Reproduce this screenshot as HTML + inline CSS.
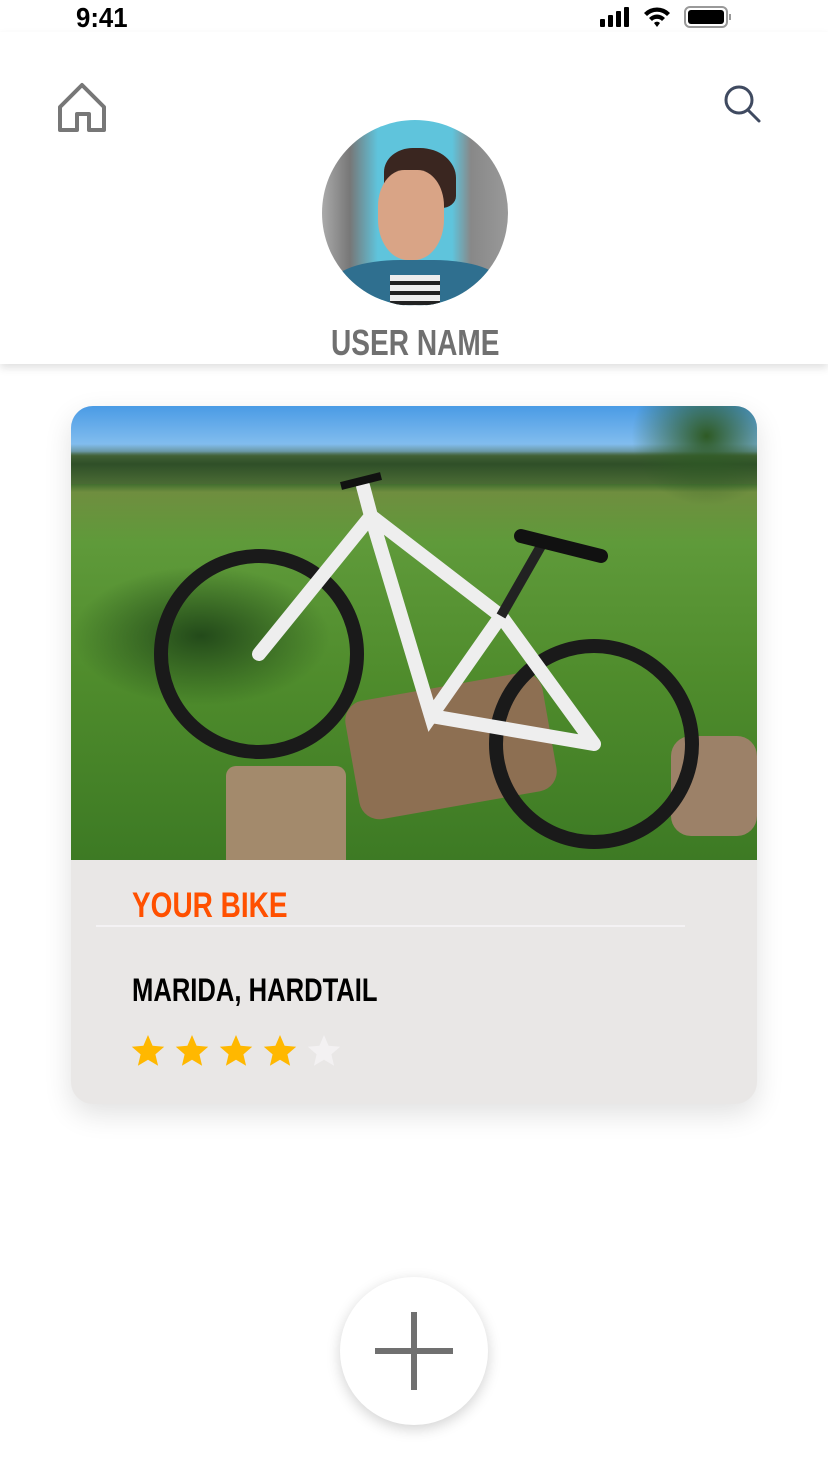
<!DOCTYPE html>
<html><head><meta charset="utf-8"><style>
html,body{margin:0;padding:0;width:828px;height:1472px;background:#fff;overflow:hidden;font-family:"Liberation Sans",sans-serif;position:relative}
.abs{position:absolute}
.cond{font-family:"Liberation Sans",sans-serif;font-weight:bold;transform:scaleX(0.8);transform-origin:left top;white-space:nowrap}
</style></head><body>
<div class="abs" style="left:0;top:0;width:828px;height:32px;background:#fff"></div>
<div class="abs" style="left:76px;top:2px;font-size:28px;font-weight:bold;color:#000;transform:scaleX(.92);transform-origin:left top">9:41</div>
<svg class="abs" style="left:596px;top:4px" width="140" height="26" viewBox="0 0 140 26">
<rect x="4" y="15" width="5" height="8" rx="1"/><rect x="12" y="11" width="5" height="12" rx="1"/><rect x="20" y="7" width="5" height="16" rx="1"/><rect x="28" y="3" width="5" height="20" rx="1"/>
<path d="M48 9a18 18 0 0 1 26 0l-3 3a14 14 0 0 0-20 0z M53 14a11 11 0 0 1 16 0l-3 3a7 7 0 0 0-10 0z M58 19a4 4 0 0 1 6 0l-3 4z"/>
<rect x="89" y="3" width="42" height="20" rx="5" fill="none" stroke="#999" stroke-width="2"/><rect x="92" y="6" width="36" height="14" rx="3"/><rect x="133" y="10" width="2" height="6" fill="#999"/>
</svg>
<div class="abs" style="left:0;top:32px;width:828px;height:332px;background:#fff;box-shadow:0 4px 8px rgba(0,0,0,.12)"></div>
<svg class="abs" style="left:56px;top:82px" width="54" height="52" viewBox="0 0 54 52"><path d="M4 48V25L26 3L48 25V48H33V32H21V48Z" fill="none" stroke="#777" stroke-width="4" stroke-linejoin="round"/></svg>
<svg class="abs" style="left:722px;top:82px" width="42" height="42" viewBox="0 0 42 42"><circle cx="17" cy="18" r="13" fill="none" stroke="#3f4a60" stroke-width="3"/><path d="M26 28L37 39" stroke="#3f4a60" stroke-width="3" stroke-linecap="round"/></svg>
<div class="abs" style="left:322px;top:120px;width:186px;height:186px;border-radius:50%;overflow:hidden;background:linear-gradient(90deg,#aaa 0%,#777 15%,#5fc4dc 30%,#5fc4dc 70%,#888 80%,#999 100%)">
<div class="abs" style="left:62px;top:28px;width:72px;height:60px;border-radius:40% 50% 20% 20%;background:#3a2620"></div>
<div class="abs" style="left:56px;top:50px;width:66px;height:90px;border-radius:40% 40% 45% 45%;background:#d9a486"></div>
<div class="abs" style="left:10px;top:140px;width:170px;height:60px;border-radius:40% 40% 0 0;background:#2f6f8f"></div>
<div class="abs" style="left:68px;top:155px;width:50px;height:40px;background:repeating-linear-gradient(180deg,#eee 0 6px,#222 6px 10px)"></div>
</div>
<div class="abs cond" style="left:331px;top:322px;font-size:36px;color:#707070;transform:scaleX(.78)">USER NAME</div>

<div class="abs" style="left:71px;top:406px;width:686px;height:698px;border-radius:22px;background:#e9e7e6;box-shadow:0 10px 28px rgba(0,0,0,.12);overflow:hidden">
<div class="abs" style="left:0;top:0;width:686px;height:454px;background:linear-gradient(180deg,#4a9be5 0%,#8cc3f0 10%,#5b7a48 11%,#3e6b2e 17%,#6f8e3f 19%,#5f9a3a 30%,#4f8c2c 60%,#3d7a24 100%)">
<div class="abs" style="left:0;top:38px;width:686px;height:40px;background:linear-gradient(180deg,transparent,#2f4f28 50%,#4a6b34)"></div>
<div class="abs" style="left:560px;top:0;width:126px;height:100px;background:radial-gradient(ellipse at 60% 30%,#2e5a24,transparent 70%)"></div>
<div class="abs" style="left:0;top:160px;width:260px;height:140px;background:radial-gradient(ellipse,#234a1a,transparent 70%)"></div>
<div class="abs" style="left:155px;top:360px;width:120px;height:94px;background:#a38a6c;border-radius:10px 10px 0 0"></div>
<div class="abs" style="left:280px;top:280px;width:200px;height:120px;background:#8d6f52;border-radius:20px;transform:rotate(-10deg)"></div>
<div class="abs" style="left:600px;top:330px;width:86px;height:100px;background:#9c8168;border-radius:20px"></div>
<svg class="abs" style="left:0;top:0" width="686" height="454" viewBox="0 0 686 454">
<circle cx="188" cy="248" r="98" fill="none" stroke="#1a1a1a" stroke-width="14"/>
<circle cx="523" cy="338" r="98" fill="none" stroke="#1a1a1a" stroke-width="14"/>
<path d="M188 248L300 110L430 210L523 338M300 110L360 310L430 210M360 310L523 338M300 110L292 80" stroke="#eee" stroke-width="14" fill="none" stroke-linecap="round"/>
<path d="M430 210L470 140" stroke="#222" stroke-width="10"/>
<path d="M450 130l80 20" stroke="#111" stroke-width="14" stroke-linecap="round"/>
<path d="M270 80l40 -10" stroke="#111" stroke-width="8"/>
</svg>
</div>
<div class="abs cond" style="left:61px;top:480px;font-size:35px;color:#ff5000">YOUR BIKE</div>
<div class="abs" style="left:25px;top:519px;width:589px;height:2px;background:#f4f2f4"></div>
<div class="abs cond" style="left:61px;top:566px;font-size:32px;color:#000">MARIDA, HARDTAIL</div>
<svg class="abs" style="left:60px;top:628px" width="212" height="36" viewBox="0 0 212 36">
<defs><path id="s" d="M17 1l4.6 10.8 11.6 1-8.8 7.6 2.7 11.4L17 25.8 6.9 31.8l2.7-11.4L.8 12.8l11.6-1z"/></defs>
<use href="#s" fill="#ffb800"/><use href="#s" x="44" fill="#ffb800"/><use href="#s" x="88" fill="#ffb800"/><use href="#s" x="132" fill="#ffb800"/><use href="#s" x="176" fill="#f3f1f2"/>
</svg>
</div>

<div class="abs" style="left:340px;top:1277px;width:148px;height:148px;border-radius:50%;background:#fff;box-shadow:0 4px 14px rgba(0,0,0,.18)"></div>
<div class="abs" style="left:375px;top:1348px;width:78px;height:6px;background:#707070"></div>
<div class="abs" style="left:411px;top:1312px;width:6px;height:78px;background:#707070"></div>
</body></html>
